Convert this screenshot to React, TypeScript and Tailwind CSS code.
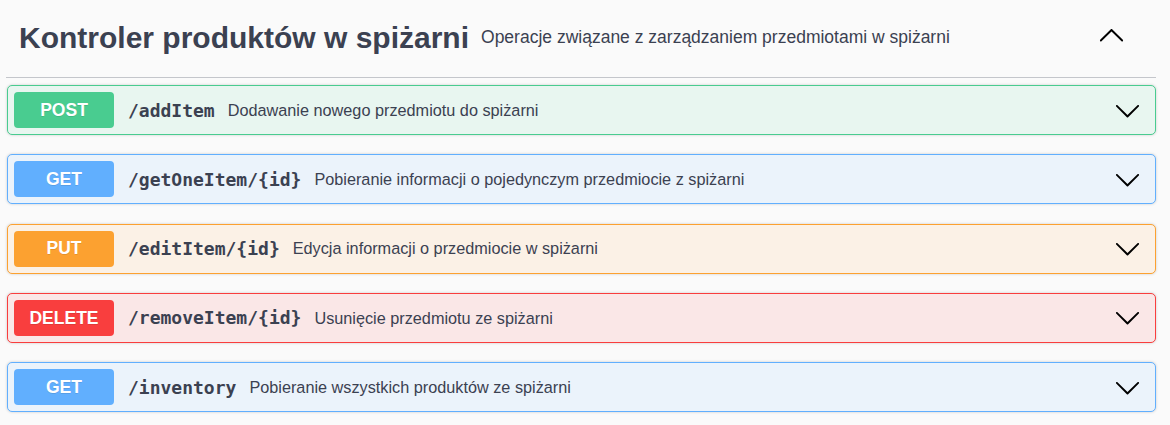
import React from "react";

type Op = { method: "POST" | "GET" | "PUT" | "DELETE"; path: string; summary: string };

const ops: Op[] = [
  { method: "POST", path: "/addItem", summary: "Dodawanie nowego przedmiotu do spiżarni" },
  { method: "GET", path: "/getOneItem/{id}", summary: "Pobieranie informacji o pojedynczym przedmiocie z spiżarni" },
  { method: "PUT", path: "/editItem/{id}", summary: "Edycja informacji o przedmiocie w spiżarni" },
  { method: "DELETE", path: "/removeItem/{id}", summary: "Usunięcie przedmiotu ze spiżarni" },
  { method: "GET", path: "/inventory", summary: "Pobieranie wszystkich produktów ze spiżarni" },
];

const styles = {
  POST: { box: "bg-[#e8f6f0] border-[#49cc90]", badge: "bg-[#49cc90]" },
  GET: { box: "bg-[#ebf3fb] border-[#61affe]", badge: "bg-[#61affe]" },
  PUT: { box: "bg-[#fbf1e6] border-[#fca130]", badge: "bg-[#fca130]" },
  DELETE: { box: "bg-[#fae7e7] border-[#f93e3e]", badge: "bg-[#f93e3e]" },
};

function ArrowDown() {
  return (
    <svg width="27" height="27" viewBox="0 0 20 20" className="shrink-0" aria-hidden>
      <path
        fill="#000"
        d="M17.418 6.109c.272-.268.709-.268.979 0s.271.701 0 .969l-7.908 7.83c-.27.268-.707.268-.979 0l-7.908-7.83c-.27-.268-.27-.701 0-.969.271-.268.709-.268.979 0L10 13.25l7.418-7.141z"
      />
    </svg>
  );
}

function ArrowUp() {
  return (
    <svg width="27" height="27" viewBox="0 0 20 20" className="shrink-0" aria-hidden>
      <path
        fill="#000"
        d="M17.418 14.908c.272.268.709.268.979 0s.271-.701 0-.969l-7.908-7.83c-.27-.268-.707-.268-.979 0l-7.908 7.83c-.27.268-.27.701 0 .969.271.268.709.268.979 0L10 7.75l7.418 7.158z"
      />
    </svg>
  );
}

export default function App() {
  return (
    <div className="min-h-screen bg-[#fafafa] text-[#3b4151] font-['Liberation_Sans',Arial,sans-serif]">
      <div className="pl-[6px] pr-[14px]">
        {/* Tag header */}
        <div className="h-[78px] flex items-center pb-[3px] pl-[13px] border-b border-[#c4c6cb]">
          <h3 className="text-[30px] leading-[45px] font-bold">Kontroler produktów w spiżarni</h3>
          <small className="text-[17.5px] ml-[12px] pt-[1px]">
            Operacje związane z zarządzaniem przedmiotami w spiżarni
          </small>
          <div className="flex-1" />
          <div className="mr-[31px] mt-[-6px]">
            <ArrowUp />
          </div>
        </div>

        {/* Operations */}
        <div className="flex flex-col gap-[19.25px] pt-[7px] pl-[1px]">
          {ops.map((op) => (
            <div
              key={op.path}
              className={`h-[50px] flex items-center px-[6px] border rounded-[5px] shadow-[0_0_3px_rgba(0,0,0,0.19)] ${styles[op.method].box}`}
            >
              <span
                className={`w-[100px] h-[36px] shrink-0 flex items-center justify-center rounded-[4px] text-white font-bold text-[17.5px] [text-shadow:0_1px_0_rgba(0,0,0,0.1)] ${styles[op.method].badge}`}
              >
                {op.method}
              </span>
              <span className="ml-[14px] font-['DejaVu_Sans_Mono',monospace] font-bold text-[18px]">{op.path}</span>
              <span className="ml-[13px] text-[16.25px]">{op.summary}</span>
              <div className="flex-1" />
              <div className="mr-[8px]">
                <ArrowDown />
              </div>
            </div>
          ))}
        </div>
      </div>
    </div>
  );
}
